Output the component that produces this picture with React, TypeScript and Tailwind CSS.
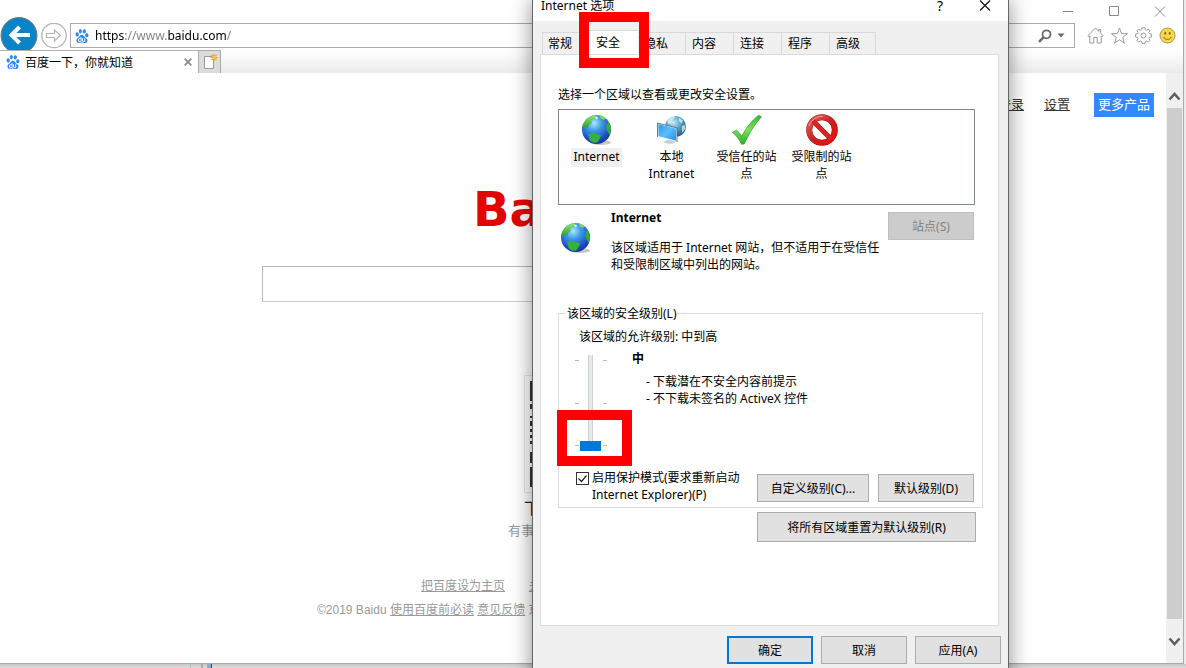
import React from "react";
import { SiBaidu } from "react-icons/si";

const ui = "font-['Noto_Sans','Noto_Sans_CJK_SC',sans-serif]";

function Globe({ id }: { id: string }) {
  return (
    <svg viewBox="0 0 32 32" className="size-8 shrink-0" aria-hidden="true">
      <defs>
        <radialGradient id={id} cx="0.42" cy="0.28" r="0.75">
          <stop offset="0" stopColor="#a6ebff" />
          <stop offset="0.35" stopColor="#3f9be8" />
          <stop offset="0.75" stopColor="#1f4fc4" />
          <stop offset="1" stopColor="#16309a" />
        </radialGradient>
        <linearGradient id={id + "g"} x1="0" y1="0" x2="0" y2="1">
          <stop offset="0" stopColor="#9be36a" />
          <stop offset="1" stopColor="#1d9a2f" />
        </linearGradient>
      </defs>
      <ellipse cx="20" cy="28.5" rx="10" ry="2.5" fill="#000" opacity="0.22" />
      <circle cx="15.5" cy="15.5" r="14.5" fill={`url(#${id})`} />
      <path d="M3 8.5C6 4 10 1.6 14 1.2l1.4 1.6-2 2.3-3.2 1 .6 2.6-2.6 2-1.4 3-2.6-.8-2.6 2C1.3 12.5 1.9 10.4 3 8.5Z" fill={`url(#${id}g)`} />
      <path d="M19 1.6c2.4.6 4.3 1.6 6 3.2l-2.8 1-2.8-1.6Z" fill="#7ed957" />
      <path d="M27.5 7.5c1.7 2.7 2.4 5.2 2.4 8.2 0 2-.5 3.8-1.2 5.200l-2.200-3.300-1.700-4.200 1.300-3.200Z" fill="#35ab3a" />
      <path d="M7 20.500l4.500-1.700 4 1 4.700 1.800-1.700 3.400-2.200 3.600-4 .2-3.500-2.200Z" fill="#35b142" />
      <path d="M14 3.500l2-1 1.200 1.500-1.600 1.300Z" fill="#fff" opacity="0.85" />
    </svg>
  );
}

function IntranetIcon() {
  return (
    <svg viewBox="0 0 32 32" className="size-8" aria-hidden="true">
      <defs>
        <radialGradient id="net" cx="0.4" cy="0.3" r="0.75">
          <stop offset="0" stopColor="#c9ecf5" />
          <stop offset="0.5" stopColor="#4f9fc0" />
          <stop offset="1" stopColor="#205a80" />
        </radialGradient>
        <linearGradient id="scr" x1="0" y1="0" x2="1" y2="1">
          <stop offset="0" stopColor="#2b98e6" />
          <stop offset="0.5" stopColor="#5dbcfb" />
          <stop offset="1" stopColor="#1d8ce6" />
        </linearGradient>
      </defs>
      <circle cx="19.5" cy="12.5" r="10.500" fill="url(#net)" />
      <path d="M11 6c2-2.500 4-3.600 7-4.200l1 2-3 2 .4 3.200-4 1.200Z M23 3.500l4 3-1.500 3L23 7Z M26 12l3-1v4l-3 4Z" fill="#d9f0ec" opacity="0.8" />
      <path d="M7 28l7-3 6 1.500-1 2.500c-3 1.200-9 1-12-1Z" fill="#c9ced2" />
      <path d="M2 9.500l18.500 4.800v13L2 22.500Z" fill="url(#scr)" stroke="#e8f4fb" strokeWidth="1" />
      <path d="M1.500 22.800V9l19.500 5v14" fill="none" stroke="#365f7c" strokeWidth="0.8" />
    </svg>
  );
}

function CheckIcon() {
  return (
    <svg viewBox="0 0 32 32" className="size-8" aria-hidden="true">
      <defs>
        <linearGradient id="chk" x1="0" y1="0" x2="0" y2="1">
          <stop offset="0" stopColor="#35b52f" />
          <stop offset="0.5" stopColor="#7be25a" />
          <stop offset="1" stopColor="#22b122" />
        </linearGradient>
      </defs>
      <path d="M1.500 18.500l3.800-2.300c2.400 1.400 4 3.400 5.400 6C15 14 20 7.500 27.500 1.200l3 1.600C23 11 18 20 13.200 30l-2.700.3C8.500 25.500 5.500 21.500 1.500 18.500Z" fill="url(#chk)" stroke="#3a9b33" strokeWidth="0.7" />
    </svg>
  );
}

function BlockedIcon() {
  return (
    <svg viewBox="0 0 32 32" className="size-8" aria-hidden="true">
      <defs>
        <linearGradient id="ban" x1="0" y1="0" x2="1" y2="1">
          <stop offset="0" stopColor="#e2605c" />
          <stop offset="0.5" stopColor="#c92322" />
          <stop offset="1" stopColor="#f00a08" />
        </linearGradient>
      </defs>
      <circle cx="16" cy="16" r="12.800" fill="#fff" stroke="#a41414" strokeWidth="6" />
      <circle cx="16" cy="16" r="12.800" fill="none" stroke="url(#ban)" strokeWidth="5" />
      <path d="M8 8l16 16" stroke="#a41414" strokeWidth="5" />
      <path d="M7 7l18 18" stroke="#d42523" strokeWidth="4.200" />
      <path d="M3 12C5 5.500 11 2 17 2.400" fill="none" stroke="#f4b3b0" strokeWidth="0.8" />
    </svg>
  );
}

function Toolbar() {
  return (
    <div className="mb-[2px] flex h-[25px] items-center">
      <button aria-label="后退" className="-my-[6px] shrink-0">
        <svg viewBox="0 0 38 38" className="size-[38px]">
          <circle cx="19" cy="18.500" r="18" fill="#0a84c6" stroke="#777b80" strokeWidth="1" />
          <path d="M30 18H11.500M19.500 10l-8 8 8 8" fill="none" stroke="#fff" strokeWidth="4" />
        </svg>
      </button>
      <button aria-label="前进" className="ml-[3px] shrink-0">
        <svg viewBox="0 0 26 26" className="size-[26px]">
          <circle cx="13" cy="12.500" r="12.200" fill="#fff" stroke="#b4b4b4" strokeWidth="1.300" />
          <path d="M5.500 10.500h8V7l6 5.500-6 5.500v-3.500h-8Z" fill="#fff" stroke="#b4b4b4" strokeWidth="1.200" />
        </svg>
      </button>
      <div className="ml-[3px] flex h-[25px] flex-1 items-center border border-[#ababab] bg-white pl-1">
        <SiBaidu className="size-[14px] shrink-0 text-[#2f86f6]" />
        <input
          aria-label="地址"
          defaultValue="https://www.baidu.com/"
          className="ml-[6px] min-w-0 flex-1 bg-[linear-gradient(90deg,#000_0_29px,#808080_29px_72px,#000_72px_132px,#808080_132px)] bg-clip-text text-xs leading-5 text-transparent outline-none"
        />
        <button aria-label="搜索" className="mr-[5px]">
          <svg viewBox="0 0 14 14" className="size-[14px]">
            <circle cx="8.500" cy="5.300" r="4" fill="none" stroke="#6a6a6a" strokeWidth="1.800" />
            <path d="M5.500 8.300L1 12.800" stroke="#6a6a6a" strokeWidth="2.400" />
          </svg>
        </button>
        <button aria-label="搜索选项" className="mr-[9px]">
          <svg viewBox="0 0 8 5" className="h-[5px] w-2">
            <path d="M0.500 0.500h7L4 4.500Z" fill="#6a6a6a" />
          </svg>
        </button>
      </div>
      <div className="mr-[7px] ml-3 flex gap-[7px]">
        <button aria-label="主页">
          <svg viewBox="0 0 17 17" className="size-[17px]" fill="none" stroke="#999" strokeWidth="1">
            <path d="M8.500 1L0.800 8.700l1.200 1 .8-.7v7h4v-5.500h3.400V16h4V9l.8.7 1.200-1-2.500-2.500V2.500h-1.800v2Z" />
          </svg>
        </button>
        <button aria-label="收藏夹">
          <svg viewBox="0 0 17 17" className="size-[17px]" fill="none" stroke="#999" strokeWidth="1">
            <path d="M8.500 1l2 5.600 6 .1-4.800 3.700 1.700 5.800-4.900-3.400-4.900 3.400 1.700-5.800L.5 6.700l6-.1Z" />
          </svg>
        </button>
        <button aria-label="工具">
          <svg viewBox="0 0 17 17" className="size-[17px]" fill="none" stroke="#999" strokeWidth="1">
            <path d="M7 .8h3l.3 2 1.300.5 1.700-1.200 1.700 1.700-1.100 1.700.5 1.200 2 .4v2.900l-2 .4-.5 1.300 1.100 1.700-1.700 1.700-1.700-1.100-1.300.5-.3 1.900H7l-.4-2-1.200-.4-1.700 1.100L2 13.400l1.100-1.700-.5-1.300-2-.4V7.100l2-.4.5-1.200L2 3.800l1.700-1.700 1.700 1.200 1.200-.5Z" />
            <circle cx="8.500" cy="8.500" r="2.500" />
          </svg>
        </button>
        <button aria-label="反馈">
          <svg viewBox="0 0 17 17" className="size-[17px]">
            <circle cx="8.500" cy="8.500" r="7.500" fill="#fbd648" stroke="#a8925a" strokeWidth="1" />
            <ellipse cx="6.300" cy="6.300" rx="0.900" ry="1.500" fill="#7d641c" />
            <ellipse cx="10.700" cy="6.300" rx="0.900" ry="1.500" fill="#7d641c" />
            <path d="M4.500 10c1.800 3.200 6.200 3.200 8 0" fill="none" stroke="#7d641c" strokeWidth="1" />
          </svg>
        </button>
      </div>
    </div>
  );
}

function WindowButtons() {
  return (
    <div className="flex h-[23px] items-center justify-end gap-[34px] pr-[17px] text-[#888]">
      <button aria-label="最小化">
        <svg viewBox="0 0 12 12" className="size-3"><path d="M1 5.500h10" stroke="currentColor" /></svg>
      </button>
      <button aria-label="最大化">
        <svg viewBox="0 0 12 12" className="size-3"><path d="M1.500 0.500h9v9h-9Z" fill="none" stroke="currentColor" /></svg>
      </button>
      <button aria-label="关闭">
        <svg viewBox="0 0 12 12" className="size-3"><path d="M1 0.500l10 10M11 0.500L1 10.500" stroke="currentColor" /></svg>
      </button>
    </div>
  );
}

function TabStrip() {
  return (
    <div className="relative flex h-[23px] bg-linear-to-b from-white to-[#ebebeb]">
      <div className="flex w-[198px] items-center border-t border-[#b0b0b0] bg-white pl-[6px]">
        <SiBaidu className="size-[14px] text-[#2f86f6]" />
        <span className="ml-[5px] flex-1 pt-px text-xs">百度一下，你就知道</span>
        <button aria-label="关闭标签" className="mr-[6px]">
          <svg viewBox="0 0 8 8" className="size-2"><path d="M0.700 0.700l6.600 6.600M7.300 0.700L0.700 7.300" stroke="#8a8a8a" strokeWidth="1.700" /></svg>
        </button>
      </div>
      <button aria-label="新建标签" className="flex w-[23px] items-center justify-center border border-b-0 border-[#ababab] bg-[#dcdcdc]">
        <svg viewBox="0 0 16 16" className="size-4">
          <path d="M2.500 2.500h9v12h-9Z" fill="#fff" stroke="#999" />
          <path d="M12 0v7M8.500 3.500h7M9.500 1l5 5M14.500 1l-5 5" stroke="#eda01c" strokeWidth="1.200" />
          <circle cx="12" cy="3.500" r="1.800" fill="#ffc747" />
        </svg>
      </button>
    </div>
  );
}

function QrCode() {
  return (
    <svg viewBox="0 0 118 118" className="size-[118px]" aria-hidden="true">
      <path d="M0.500 0.500h117v117H0.500Z" fill="#fff" stroke="#e4e4e4" />
      <path
        d="M6 6h20v20H6ZM6 29h5v5H6ZM6 41h5v2H6ZM6 46h5v5H6ZM6 54h5v3H6ZM6 60h5v3H6ZM6 66h5v3H6ZM6 77h5v11H6ZM6 92h20v20H6Z"
        fill="#333"
      />
    </svg>
  );
}

function Page() {
  return (
    <main className="flex-1 bg-white font-['Liberation_Sans','Noto_Sans_CJK_SC',sans-serif]">
      <nav className="flex items-center justify-end gap-5 pt-5 pr-3 text-[13px] text-[#333]">
        <a href="#login" className="underline">登录</a>
        <a href="#settings" className="underline">设置</a>
        <a href="#more" className="ml-1 bg-[#3388ff] px-1 leading-6 text-white">更多产品</a>
      </nav>
      <div className="mx-auto w-[642px] pt-[62px]">
        <div className="pl-[211px] font-['DejaVu_Sans',sans-serif] text-5xl leading-[60px] font-bold text-[#e10602]">Bai</div>
        <input aria-label="搜索" className="mt-[27px] block h-9 w-full border border-[#b8b8b8] border-b-[#ccc] outline-none" />
        <div className="mt-[73px] pl-[262px]">
          <QrCode />
          <p className="mt-1 text-base leading-6 text-[#222]">下载百度</p>
          <p className="-ml-4 text-[13px] leading-5 text-[#999]">有事搜一搜</p>
        </div>
        <div className="mt-[35px] flex gap-6 pl-[159px] text-xs leading-5 text-[#999]">
          <a href="#home" className="underline">把百度设为主页</a>
          <a href="#about" className="underline">关于百度</a>
        </div>
        <p className="mt-1 pl-[55px] text-xs leading-5 text-[#999]">
          ©2019 Baidu <a href="#duty" className="underline">使用百度前必读</a>{" "}
          <a href="#feedback" className="underline">意见反馈</a> 京
        </p>
      </div>
    </main>
  );
}

function ScrollBar() {
  return (
    <div className="flex w-[17px] flex-col bg-[#f0f0f0] px-px text-[#606060]" aria-hidden="true">
      <svg viewBox="0 0 15 34" className="h-[35px] w-[15px]">
        <path d="M2.500 26L7.500 20.500l5 5.500" fill="none" stroke="currentColor" strokeWidth="2.600" />
      </svg>
      <div className="flex-1 bg-[#cdcdcd]" />
      <svg viewBox="0 0 15 44" className="h-11 w-[15px]">
        <path d="M2.500 19.500L7.500 25l5-5.500" fill="none" stroke="currentColor" strokeWidth="2.600" />
      </svg>
    </div>
  );
}

const zones = [
  { name: "Internet", icon: <Globe id="zone" />, active: true },
  { name: "本地 Intranet", icon: <IntranetIcon />, active: false },
  { name: "受信任的站点", icon: <CheckIcon />, active: false },
  { name: "受限制的站点", icon: <BlockedIcon />, active: false },
];

function PushButton({ children, className = "" }: { children: React.ReactNode; className?: string }) {
  return <button className={"border border-[#adadad] bg-[#e1e1e1] text-center " + className}>{children}</button>;
}

function Tick() {
  return (
    <div className="flex justify-between">
      <i className="h-px w-1 bg-[#bbb]" />
      <i className="h-px w-1 bg-[#bbb]" />
    </div>
  );
}

function SecurityPanel() {
  return (
    <section className="mr-[9px] ml-[7px] border border-[#dcdcdc] bg-white pt-8 pr-[15px] pb-[83px] pl-[17px]">
      <p className="leading-4">选择一个区域以查看或更改安全设置。</p>
      <ul className="mt-[6px] mr-2 flex h-24 border border-[#828790] pt-1">
        {zones.map((z) => (
          <li key={z.name} className="flex w-[75px] flex-col items-center text-center">
            {z.icon}
            <button className={z.active ? "mt-[2px] bg-[#f0f0f0] px-[2px] pb-[2px]" : "mt-[2px] px-[6px]"}>{z.name}</button>
          </li>
        ))}
      </ul>
      <div className="mt-1 mr-[9px] flex items-start">
        <div className="mt-[13px] ml-[2px]"><Globe id="current" /></div>
        <div className="ml-[19px] flex-1">
          <h2 className="font-bold">Internet</h2>
          <p className="mt-[13px] whitespace-nowrap">该区域适用于 Internet 网站，但不适用于在受信任<br />和受限制区域中列出的网站。</p>
        </div>
        <button disabled className="mt-[3px] h-7 w-[86px] border border-[#bfbfbf] bg-[#ccc] text-[#838383]">站点(S)</button>
      </div>
      <fieldset className="mt-8 border border-[#dcdcdc] pt-[6px] pb-1">
        <legend className="ml-[7px] px-px">该区域的安全级别(L)</legend>
        <p className="pl-5">该区域的允许级别: 中到高</p>
        <div className="mt-[5px] flex pl-4">
          <div className="relative mt-[5px] h-24 w-8">
            <div className="flex h-24 flex-col justify-between py-[5px]"><Tick /><Tick /><Tick /></div>
            <input
              type="range"
              min={0}
              max={2}
              defaultValue={0}
              aria-label="安全级别"
              className="absolute top-0 left-[5px] m-0 h-24 w-[21px] appearance-none bg-[linear-gradient(90deg,#d0d3d3_0_1px,#e7eaea_1px_4px,#d0d3d3_4px)] bg-[length:5px_100%] bg-center bg-no-repeat [direction:rtl] [writing-mode:vertical-lr] [&::-webkit-slider-thumb]:h-[10px] [&::-webkit-slider-thumb]:w-[21px] [&::-webkit-slider-thumb]:appearance-none [&::-webkit-slider-thumb]:bg-[#0078d7]"
            />
          </div>
          <div className="ml-[25px]">
            <h3 className="font-bold">中</h3>
            <ul className="mt-[6px] ml-[14px]">
              <li>- 下载潜在不安全内容前提示</li>
              <li>- 不下载未签名的 ActiveX 控件</li>
            </ul>
          </div>
        </div>
        <div className="mt-[18px] flex items-start pr-2 pl-[17px]">
          <span className="relative mt-[3px] size-[13px]">
            <input id="protect" type="checkbox" defaultChecked className="block size-[13px] appearance-none border border-[#333] bg-white" />
            <svg viewBox="0 0 13 13" className="pointer-events-none absolute inset-0 size-[13px]">
              <path d="M2.500 6.500l3 3 5-6" fill="none" stroke="#222" strokeWidth="1.200" />
            </svg>
          </span>
          <label htmlFor="protect" className="ml-[3px] flex-1 whitespace-nowrap">启用保护模式(要求重新启动<br />Internet Explorer)(P)</label>
          <PushButton className="mt-[5px] h-7 w-28">自定义级别(C)...</PushButton>
          <PushButton className="mt-[5px] ml-[9px] h-7 w-24">默认级别(D)</PushButton>
        </div>
      </fieldset>
      <div className="mt-1 mr-[7px] flex justify-end">
        <PushButton className="h-[30px] w-[219px]">将所有区域重置为默认级别(R)</PushButton>
      </div>
    </section>
  );
}

function OptionsDialog() {
  const tab = "h-[22px] w-12 border-t border-r border-[#d9d9d9] pl-[6px] text-left";
  return (
    <div role="dialog" aria-label="Internet 选项" className="absolute top-0 left-[532px] w-[477px] border-x border-[#666] bg-[#f0f0f0] pb-8 text-xs leading-[17px] shadow-[0_0_20px_rgba(0,0,0,0.45)]">
      <header className="flex h-[21px] items-start bg-white pl-2 leading-3">
        <span className="flex-1">Internet 选项</span>
        <button aria-label="帮助" className="mr-9 text-sm leading-3">?</button>
        <button aria-label="关闭" className="mr-[17px]">
          <svg viewBox="0 0 12 12" className="size-3"><path d="M1 0.500l10 10M11 0.500L1 10.500" stroke="#111" strokeWidth="1.200" /></svg>
        </button>
      </header>
      <div role="tablist" className="flex items-end pt-[9px] pl-[9px]">
        <button role="tab" className="h-[22px] w-[46px] border-t border-l border-[#d9d9d9] pl-[5px] text-left">常规</button>
        <button role="tab" aria-selected="true" className="h-6 w-[50px] border-t border-[#d9d9d9] bg-white pb-px pl-2 text-left">安全</button>
        <button role="tab" className={tab}>隐私</button>
        <button role="tab" className={tab}>内容</button>
        <button role="tab" className={tab}>连接</button>
        <button role="tab" className={tab}>程序</button>
        <button role="tab" className="h-[22px] w-[46px] border-t border-r border-[#d9d9d9] pl-[6px] text-left">高级</button>
      </div>
      <SecurityPanel />
      <footer className="mt-[10px] flex justify-end gap-2 pr-[7px]">
        <button className="h-7 w-[86px] border-2 border-[#0078d7] bg-[#e1e1e1]">确定</button>
        <PushButton className="h-7 w-[86px]">取消</PushButton>
        <PushButton className="h-7 w-[86px]">应用(A)</PushButton>
      </footer>
      <div className="pointer-events-none absolute top-3 left-[46px] h-14 w-[70px] border-10 border-[#f00]" />
      <div className="pointer-events-none absolute top-[410px] left-6 h-14 w-[75px] border-10 border-[#f00]" />
    </div>
  );
}

export default function App() {
  return (
    <div className={"relative flex min-h-screen flex-col overflow-hidden bg-[#ececec] text-black " + ui}>
      <div className="mr-[2px] flex flex-1 flex-col border-r border-b border-[#aaa] bg-white">
        <WindowButtons />
        <Toolbar />
        <TabStrip />
        <div className="flex flex-1">
          <Page />
          <ScrollBar />
        </div>
      </div>
      <div className="flex h-1 bg-linear-to-b from-[#c8c8c8] to-[#dedede] pl-[190px]">
        <i className="w-px bg-[#aebfc2]" />
        <i className="ml-[10px] w-[2px] bg-[#aaa]" />
        <i className="ml-1 w-[5px] border-r border-[#444] bg-[#86aad0]" />
      </div>
      <OptionsDialog />
    </div>
  );
}
